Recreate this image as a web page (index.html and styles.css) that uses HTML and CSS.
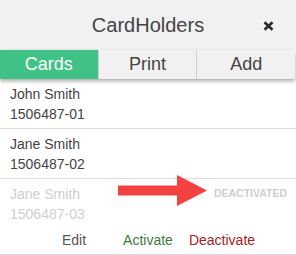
FILE: index.html
```html
<!DOCTYPE html>
<html>
<head>
<meta charset="utf-8">
<link rel="stylesheet" href="styles.css">
</head>
<body>
<div class="panel">
  <div class="header">
    <div class="title">CardHolders</div>
    <div class="close"><svg width="11" height="10" viewBox="0 0 11 10"><path d="M1.5 1.2 L9.5 8.8 M9.5 1.2 L1.5 8.8" stroke="#2a2a2a" stroke-width="2.6" stroke-linecap="butt"/></svg></div>
  </div>
  <div class="tabs">
    <div class="tab active">Cards</div>
    <div class="tab">Print</div>
    <div class="tab">Add</div>
  </div>
  <div class="list">
    <div class="row">
      <div class="line">John Smith</div>
      <div class="line">1506487-01</div>
    </div>
    <div class="row">
      <div class="line">Jane Smith</div>
      <div class="line">1506487-02</div>
    </div>
    <div class="row deactivated">
      <div class="line">Jane Smith</div>
      <div class="line">1506487-03</div>
      <div class="status">DEACTIVATED</div>
      <svg class="arrow" width="90" height="32" viewBox="0 0 90 32"><polygon points="0,10.5 59,10.5 59,0 89,15.5 59,31 59,20.5 0,20.5" fill="#f44242"/></svg>
      <div class="actions">
        <span class="act edit">Edit</span>
        <span class="act activate">Activate</span>
        <span class="act deactivate">Deactivate</span>
      </div>
    </div>
  </div>
</div>
</body>
</html>
```
FILE: styles.css
```css
html, body {
  margin: 0;
  padding: 0;
  background: #ffffff;
}
body {
  font-family: "Liberation Sans", Arial, sans-serif;
  width: 296px;
  height: 255px;
  overflow: hidden;
}
.panel {
  width: 296px;
}
.header {
  height: 50px;
  background: #f1f1f1;
  position: relative;
  display: flex;
  align-items: center;
  justify-content: center;
}
.title {
  font-size: 20px;
  color: #454545;
  padding-top: 1px;
}
.close {
  position: absolute;
  right: 22px;
  top: 21px;
  width: 11px;
  height: 10px;
  display: flex;
}
.tabs {
  display: flex;
  width: 295px;
  height: 29px;
  background: #f1f1f1;
  box-shadow: 0 2px 4px rgba(0,0,0,0.35);
  position: relative;
  z-index: 1;
}
.tab {
  flex: 1;
  display: flex;
  align-items: center;
  justify-content: center;
  font-size: 18px;
  color: #444;
  border-left: 1px solid #cfcfcf;
}
.tab:first-child {
  border-left: none;
}
.tab.active {
  background: #40c287;
  color: #ffffff;
}
.list {
  background: #fff;
}
.row {
  padding: 5px 10px 4px;
  border-bottom: 1px solid #dcdcdc;
  position: relative;
}
.line {
  font-size: 14px;
  line-height: 20px;
  color: #444;
}
.deactivated .line {
  color: #cfcfcf;
}
.status {
  position: absolute;
  right: 9px;
  top: 6px;
  font-size: 10.5px;
  font-weight: bold;
  color: #cfcfcf;
  line-height: 16px;
}
.arrow {
  position: absolute;
  left: 118px;
  top: -4px;
}
.actions {
  display: grid;
  grid-template-columns: repeat(3, 74px);
  justify-content: center;
  margin: 6px -10px 0;
  line-height: 20px;
  font-size: 14px;
}
.act {
  text-align: center;
}
.edit { color: #555; }
.activate { color: #3c7a3c; }
.deactivate { color: #a52325; }
```
